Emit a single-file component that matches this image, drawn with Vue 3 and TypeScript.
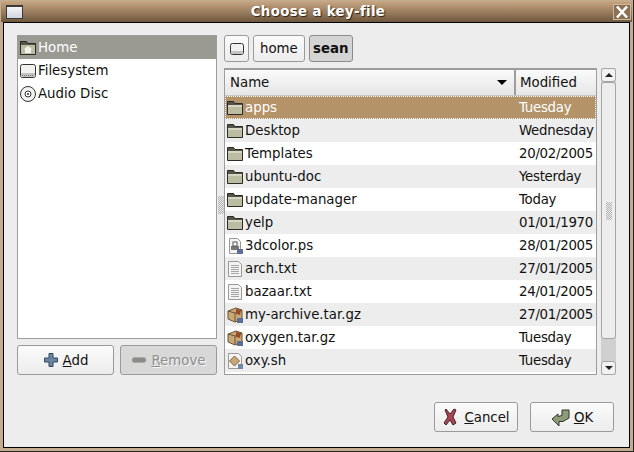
<script setup lang="ts">
type Kind = 'folder' | 'ps' | 'txt' | 'tar' | 'sh'

const places = [
  { name: 'Home', icon: 'home', selected: true },
  { name: 'Filesystem', icon: 'disk', selected: false },
  { name: 'Audio Disc', icon: 'cd', selected: false },
]

const files: { name: string; modified: string; kind: Kind }[] = [
  { name: 'apps', modified: 'Tuesday', kind: 'folder' },
  { name: 'Desktop', modified: 'Wednesday', kind: 'folder' },
  { name: 'Templates', modified: '20/02/2005', kind: 'folder' },
  { name: 'ubuntu-doc', modified: 'Yesterday', kind: 'folder' },
  { name: 'update-manager', modified: 'Today', kind: 'folder' },
  { name: 'yelp', modified: '01/01/1970', kind: 'folder' },
  { name: '3dcolor.ps', modified: '28/01/2005', kind: 'ps' },
  { name: 'arch.txt', modified: '27/01/2005', kind: 'txt' },
  { name: 'bazaar.txt', modified: '24/01/2005', kind: 'txt' },
  { name: 'my-archive.tar.gz', modified: '27/01/2005', kind: 'tar' },
  { name: 'oxygen.tar.gz', modified: 'Tuesday', kind: 'tar' },
  { name: 'oxy.sh', modified: 'Tuesday', kind: 'sh' },
]
</script>

<template>
  <div class="window">
    <div class="titlebar">
      <span class="menu-btn"></span>
      <span class="title">Choose a key-file</span>
      <span class="close-btn">
        <svg width="16" height="14" viewBox="0 0 16 14">
          <path d="M3 1.500L13 12.500M13 1.500L3 12.500" stroke="#fff" stroke-width="2.600" />
        </svg>
      </span>
    </div>
    <div class="client">
      <div class="panes">
        <div class="left">
          <div class="places">
            <div v-for="p in places" :key="p.name" class="place" :class="{ selected: p.selected }">
              <svg v-if="p.icon === 'home'" class="icon" width="18" height="18" viewBox="0 0 18 18">
                <path d="M1.500 15.500V2.500h6l1.500 2h7.500v11z" fill="#55544a" stroke="#2c2b24" />
                <path d="M2 6h14v9H2z" fill="#bcbca2" />
                <path d="M9 7l4.500 3.500H12V14H6v-3.500H4.500z" fill="#f2f2ea" />
              </svg>
              <svg v-else-if="p.icon === 'disk'" class="icon" width="18" height="18" viewBox="0 0 18 18">
                <rect x="1.500" y="2.500" width="15" height="13" rx="2" fill="#f1f1ef" stroke="#333" />
                <rect x="2" y="11" width="14" height="4" fill="#c4c4c0" />
                <path d="M3 13.500h12" stroke="#777" stroke-dasharray="1 1" />
              </svg>
              <svg v-else class="icon" width="18" height="18" viewBox="0 0 18 18">
                <circle cx="9" cy="9" r="7.500" fill="#f2f2f0" stroke="#333" />
                <circle cx="9" cy="9" r="3" fill="#fff" stroke="#333" />
                <circle cx="9" cy="9" r="1" fill="#333" />
              </svg>
              <span>{{ p.name }}</span>
            </div>
          </div>
          <div class="left-buttons">
            <button class="btn">
              <svg width="16" height="16" viewBox="0 0 16 16">
                <path d="M6 1.500h4v4.500h4.500v4H10v4.500H6V10H1.500V6H6z" fill="#6a86a6" stroke="#39475a" />
              </svg>
              <span><u>A</u>dd</span>
            </button>
            <button class="btn disabled">
              <svg width="16" height="16" viewBox="0 0 16 16">
                <rect x="1" y="5.500" width="14" height="5" rx="2.500" fill="#8b8b88" stroke="#a8a8a6" />
              </svg>
              <span><u>R</u>emove</span>
            </button>
          </div>
        </div>

        <div class="handle"><span class="grip"></span></div>

        <div class="right">
          <div class="pathbar">
            <button class="crumb disk-crumb">
              <svg width="16" height="16" viewBox="0 0 16 16">
                <rect x="1.500" y="2.500" width="13" height="11" rx="2" fill="#f1f1ef" stroke="#333" />
                <rect x="2" y="10" width="12" height="3" fill="#c4c4c0" />
              </svg>
            </button>
            <button class="crumb">home</button>
            <button class="crumb active">sean</button>
          </div>
          <div class="browser">
            <div class="tree">
              <div class="head">
                <div class="head-name">
                  <span>Name</span>
                  <span class="sort"></span>
                </div>
                <div class="head-mod">Modified</div>
              </div>
              <div
                v-for="(f, i) in files"
                :key="f.name"
                class="row"
                :class="{ selected: i === 0, odd: i % 2 === 1 }"
              >
                <div class="cell-name">
                  <svg v-if="f.kind === 'folder'" class="icon" width="18" height="18" viewBox="0 0 18 18">
                    <path d="M1.500 15.500V2.500h6l1.500 2h7.500v11z" fill="#55544a" stroke="#2c2b24" />
                    <path d="M2 6h14v9H2z" fill="#bcbca2" />
                    <path d="M2 6h14v2H2z" fill="#d6d6c4" />
                  </svg>
                  <svg v-else-if="f.kind === 'ps'" class="icon" width="18" height="18" viewBox="0 0 18 18">
                    <path d="M3.500 1.500h8l3 3v12h-11z" fill="#f3f3f1" stroke="#999" />
                    <rect x="5" y="9" width="8" height="4" fill="#777" />
                    <rect x="7" y="5" width="4" height="4" fill="#fff" stroke="#555" />
                    <rect x="11" y="12" width="6" height="5" fill="#5b6d99" />
                  </svg>
                  <svg v-else-if="f.kind === 'txt'" class="icon" width="18" height="18" viewBox="0 0 18 18">
                    <path d="M2.500 1.500h10l3 3v12h-13z" fill="#f3f3f1" stroke="#999" />
                    <path d="M5 5.500h8M5 7.500h8M5 9.500h8M5 11.500h8M5 13.500h8" stroke="#a5a5a5" />
                  </svg>
                  <svg v-else-if="f.kind === 'tar'" class="icon" width="18" height="18" viewBox="0 0 18 18">
                    <path d="M2 5l8-3 6 2v9l-7 3-7-3z" fill="#c9a877" stroke="#6c5436" />
                    <path d="M9 7v9M2 5l7 2 7-3" fill="none" stroke="#6c5436" />
                    <path d="M10 3l5 1-1 5-4-1z" fill="#9a4a2a" />
                    <rect x="11" y="12" width="6" height="5" fill="#5b6d99" />
                  </svg>
                  <svg v-else class="icon" width="18" height="18" viewBox="0 0 18 18">
                    <path d="M2.500 1.500h10l3 3v12h-13z" fill="#f3f3f1" stroke="#999" />
                    <path d="M8.500 4l5 5-5 5-5-5z" fill="#c8a878" stroke="#7a6548" />
                    <rect x="12" y="12" width="5" height="5" fill="#7089a8" />
                  </svg>
                  <span>{{ f.name }}</span>
                </div>
                <div class="cell-mod">{{ f.modified }}</div>
              </div>
            </div>
            <div class="scrollbar">
              <span class="arrow up"></span>
              <div class="thumb"><span class="grip"></span></div>
              <div class="trough"></div>
              <span class="arrow down"></span>
            </div>
          </div>
        </div>
      </div>

      <div class="actions">
        <button class="btn action">
          <svg width="18" height="18" viewBox="0 0 18 18">
            <path d="M4 1l4 5 4-5 2 1-3 7 3 6-3 2-3-5-4 5-2-2 4-6-3-7z" fill="#a84754" stroke="#4a2227" />
          </svg>
          <span><u>C</u>ancel</span>
        </button>
        <button class="btn action ok">
          <svg width="20" height="20" viewBox="0 0 20 20">
            <path d="M1 12l6-5v2.500l4-1V3h7v8l-6 3.500H8V19z" fill="#8c9c78" stroke="#2e3426" />
          </svg>
          <span><u>O</u>K</span>
        </button>
      </div>
    </div>
  </div>
</template>

<style>
html, body {
  margin: 0;
  background: #1d1710;
}
</style>

<style scoped>
.window {
  box-sizing: border-box;
  width: 634px;
  height: 452px;
  display: flex;
  flex-direction: column;
  padding: 1px;
  background: #c3ac90;
  border-right: 1px solid #222;
  border-bottom: 1px solid #222;
  font-family: "DejaVu Sans", sans-serif;
  font-size: 13.33px;
  color: #111;
}

.titlebar {
  flex: none;
  height: 21px;
  display: flex;
  align-items: center;
  justify-content: space-between;
  padding: 0 1px 0 5px;
  background: linear-gradient(#c8a783, #6f573e);
}

.menu-btn {
  width: 15px;
  height: 11px;
  border: 1px solid #3a3a3a;
  border-top-width: 2px;
  background: linear-gradient(#f5f5f8, #cfd4de);
}

.title {
  font-weight: bold;
  font-size: 13.33px;
  letter-spacing: 0.35px;
  color: #fff;
  text-shadow: 1px 1px 1px #2c2216;
}

.close-btn {
  width: 16px;
  height: 14px;
  display: flex;
  border: 1px solid #cbb79c;
  background: #8d7053;
}

.client {
  flex: 1;
  min-height: 0;
  margin: 0 2px 2px;
  padding: 12px 15px 15px 13px;
  border: 1px solid #000;
  display: flex;
  flex-direction: column;
  background: #ededed;
}

.panes {
  display: flex;
  flex: none;
}

.left {
  width: 200px;
  flex: none;
  display: flex;
  flex-direction: column;
  gap: 6px;
}

.places {
  box-sizing: border-box;
  height: 304px;
  border: 1px solid #9d9d9d;
  background: #fff;
}

.place {
  height: 23px;
  display: flex;
  align-items: center;
  gap: 1px;
  padding-left: 1px;
}

.place.selected {
  background: #9b9a92;
  color: #fff;
}

.left-buttons {
  display: flex;
  gap: 6px;
}

.btn {
  box-sizing: border-box;
  flex: 1;
  height: 30px;
  display: flex;
  align-items: center;
  justify-content: center;
  gap: 4px;
  padding: 0;
  border: 1px solid #9a9a96;
  border-radius: 3px;
  background: linear-gradient(#fbfbfb, #ececec);
  font: inherit;
  color: #111;
}

.btn.disabled {
  background: #d8d8d8;
  color: #8e8e8e;
  text-shadow: 1px 1px 0 #f5f5f5;
}

.handle {
  flex: none;
  width: 7px;
  height: 340px;
  display: flex;
  align-items: center;
  justify-content: center;
}

.grip {
  display: block;
  width: 6px;
  height: 18px;
  background: conic-gradient(#b2b2b2 25%, transparent 0 50%, #b2b2b2 0 75%, transparent 0) 0 0 / 2px 2px;
}

.right {
  flex: none;
  width: 392px;
  display: flex;
  flex-direction: column;
  gap: 5px;
}

.pathbar {
  display: flex;
  gap: 4px;
  height: 28px;
}

.crumb {
  box-sizing: border-box;
  height: 27px;
  padding: 0 6px;
  border: 1px solid #9a9a96;
  border-radius: 3px;
  background: linear-gradient(#fbfbfb, #ececec);
  font: inherit;
  color: #111;
}

.disk-crumb {
  width: 25px;
  padding: 0;
  display: flex;
  align-items: center;
  justify-content: center;
}

.crumb.active {
  width: 44px;
  padding: 0;
  background: #d4d4d4;
  font-weight: bold;
  border-color: #8c8c8c;
}

.browser {
  display: flex;
  gap: 4px;
}

.tree {
  box-sizing: border-box;
  width: 375px;
  height: 307px;
  border: 1px solid #9d9d9d;
  border-top-width: 2px;
  background: #fff;
  overflow: hidden;
}

.head {
  height: 26px;
  display: flex;
  background: linear-gradient(#fafafa, #e6e6e6);
  border-bottom: 1px solid #c8c8c8;
  box-sizing: border-box;
}

.head-name {
  box-sizing: border-box;
  width: 291px;
  display: flex;
  align-items: center;
  justify-content: space-between;
  padding: 0 7px 0 5px;
  border-right: 2px solid #9d9d9d;
}

.sort {
  width: 0;
  height: 0;
  border-left: 5px solid transparent;
  border-right: 5px solid transparent;
  border-top: 5px solid #000;
}

.head-mod {
  flex: 1;
  display: flex;
  align-items: center;
  padding-left: 4px;
}

.row {
  height: 23px;
  display: flex;
  align-items: center;
}

.row.odd {
  background: #ededed;
}

.row.selected {
  background: #b49369;
  color: #fff;
  outline: 1px dotted #fff;
  outline-offset: -1px;
}

.cell-name {
  width: 291px;
  flex: none;
  display: flex;
  align-items: center;
  gap: 1px;
  padding-left: 1px;
  box-sizing: border-box;
}

.cell-mod {
  padding-left: 3px;
  white-space: nowrap;
  letter-spacing: -0.28px;
}

.icon {
  flex: none;
}

.scrollbar {
  box-sizing: border-box;
  width: 15px;
  height: 307px;
  display: flex;
  flex-direction: column;
  background: #d0d0d0;
}

.arrow {
  box-sizing: border-box;
  flex: none;
  height: 14px;
  display: flex;
  align-items: center;
  justify-content: center;
  background: #f2f2f2;
  border: 1px solid #a5a5a5;
  border-radius: 3px;
}

.arrow::before {
  content: "";
  border-left: 4px solid transparent;
  border-right: 4px solid transparent;
}

.arrow.up::before {
  border-bottom: 4px solid #222;
}

.arrow.down::before {
  border-top: 4px solid #222;
}

.thumb {
  box-sizing: border-box;
  height: 257px;
  flex: none;
  display: flex;
  align-items: center;
  justify-content: center;
  background: #ededed;
  border: 1px solid #a5a5a5;
  border-radius: 3px;
}

.trough {
  flex: 1;
}

.actions {
  margin-top: 27px;
  display: flex;
  justify-content: flex-end;
  gap: 12px;
}

.btn.action {
  flex: none;
  width: 84px;
}

.btn.ok {
  gap: 3px;
}
</style>
